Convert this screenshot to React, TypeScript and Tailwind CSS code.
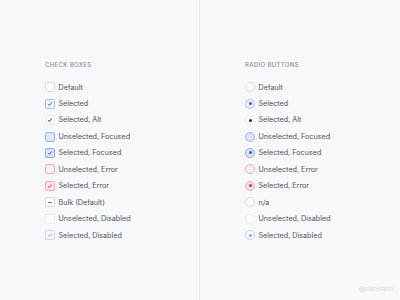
import { ReactNode } from "react";

type Kind =
  | "default"
  | "selected"
  | "alt"
  | "focused"
  | "selFocused"
  | "error"
  | "selError"
  | "bulk"
  | "disabled"
  | "selDisabled";

const rows: { kind: Kind; box: string; radio: string }[] = [
  { kind: "default", box: "Default", radio: "Default" },
  { kind: "selected", box: "Selected", radio: "Selected" },
  { kind: "alt", box: "Selected, Alt", radio: "Selected, Alt" },
  { kind: "focused", box: "Unselected, Focused", radio: "Unselected, Focused" },
  { kind: "selFocused", box: "Selected, Focused", radio: "Selected, Focused" },
  { kind: "error", box: "Unselected, Error", radio: "Unselected, Error" },
  { kind: "selError", box: "Selected, Error", radio: "Selected, Error" },
  { kind: "bulk", box: "Bulk (Default)", radio: "n/a" },
  { kind: "disabled", box: "Unselected, Disabled", radio: "Unselected, Disabled" },
  { kind: "selDisabled", box: "Selected, Disabled", radio: "Selected, Disabled" },
];

const shell: Record<Kind, string> = {
  default: "border-[#d3d7de] bg-white",
  selected: "border-[#aebef0] bg-[#eef2fd]",
  alt: "border-[#e6e8ec] bg-white",
  focused: "border-[#9fb3ee] bg-[#dde5fb]",
  selFocused: "border-[#8ea5ec] bg-[#dde5fb]",
  error: "border-[#f2a7b7] bg-[#fdf0f3]",
  selError: "border-[#f2a7b7] bg-[#fde6ec]",
  bulk: "border-[#d3d7de] bg-white",
  disabled: "border-[#e8eaee] bg-white",
  selDisabled: "border-[#c9d4f5] bg-[#f7f9fe]",
};

const markColor: Partial<Record<Kind, string>> = {
  selected: "#2f55d4",
  alt: "#1f2937",
  selFocused: "#2f55d4",
  selError: "#e0245e",
  selDisabled: "#8fa6ea",
};

const Check = ({ color }: { color: string }) => (
  <svg width="6" height="6" viewBox="0 0 8 8" fill="none">
    <path d="M1.8 4.6 L3.3 6 L6.2 2.2" stroke={color} strokeWidth="1.2" strokeLinecap="round" strokeLinejoin="round" />
  </svg>
);

const Box = ({ kind }: { kind: Kind }) => {
  const c = markColor[kind];
  return (
    <span className={`flex h-[10px] w-[10px] items-center justify-center rounded-[2px] border ${shell[kind]}`}>
      {c && <Check color={c} />}
      {kind === "bulk" && <span className="h-px w-[4px] bg-[#6b7280]" />}
    </span>
  );
};

const Radio = ({ kind }: { kind: Kind }) => {
  const c = markColor[kind];
  const k = kind === "bulk" ? "default" : kind;
  return (
    <span className={`flex h-[10px] w-[10px] items-center justify-center rounded-full border ${shell[k]}`}>
      {c && <span className="h-[3px] w-[3px] rounded-full" style={{ background: c }} />}
    </span>
  );
};

const Column = ({ title, children }: { title: string; children: ReactNode }) => (
  <div className="flex flex-col pl-[45px] pt-[61px]">
    <div className="mb-[10px] text-[6px] font-medium uppercase leading-[8px] tracking-[0.06em] text-[#8792a6]">{title}</div>
    {children}
  </div>
);

const Row = ({ icon, label }: { icon: ReactNode; label: string }) => (
  <div className="flex h-[16.45px] items-center gap-[3.5px]">
    {icon}
    <span className="text-[7.2px] leading-none text-[#4d5461]">{label}</span>
  </div>
);

export default function App() {
  return (
    <div className="relative flex h-[300px] w-[400px] bg-[#f7f8fa] font-['Inter',sans-serif]">
      <div className="w-[200px] border-r border-[#e6e8ec]">
        <Column title="Check Boxes">
          {rows.map((r) => (
            <Row key={r.box} icon={<Box kind={r.kind} />} label={r.box} />
          ))}
        </Column>
      </div>
      <div className="w-[200px]">
        <Column title="Radio Buttons">
          {rows.map((r) => (
            <Row key={r.radio} icon={<Radio kind={r.kind} />} label={r.radio} />
          ))}
        </Column>
      </div>
      <span className="absolute bottom-[7px] right-[6px] text-[6px] text-[#d6d9de]">@planetabhi</span>
    </div>
  );
}
